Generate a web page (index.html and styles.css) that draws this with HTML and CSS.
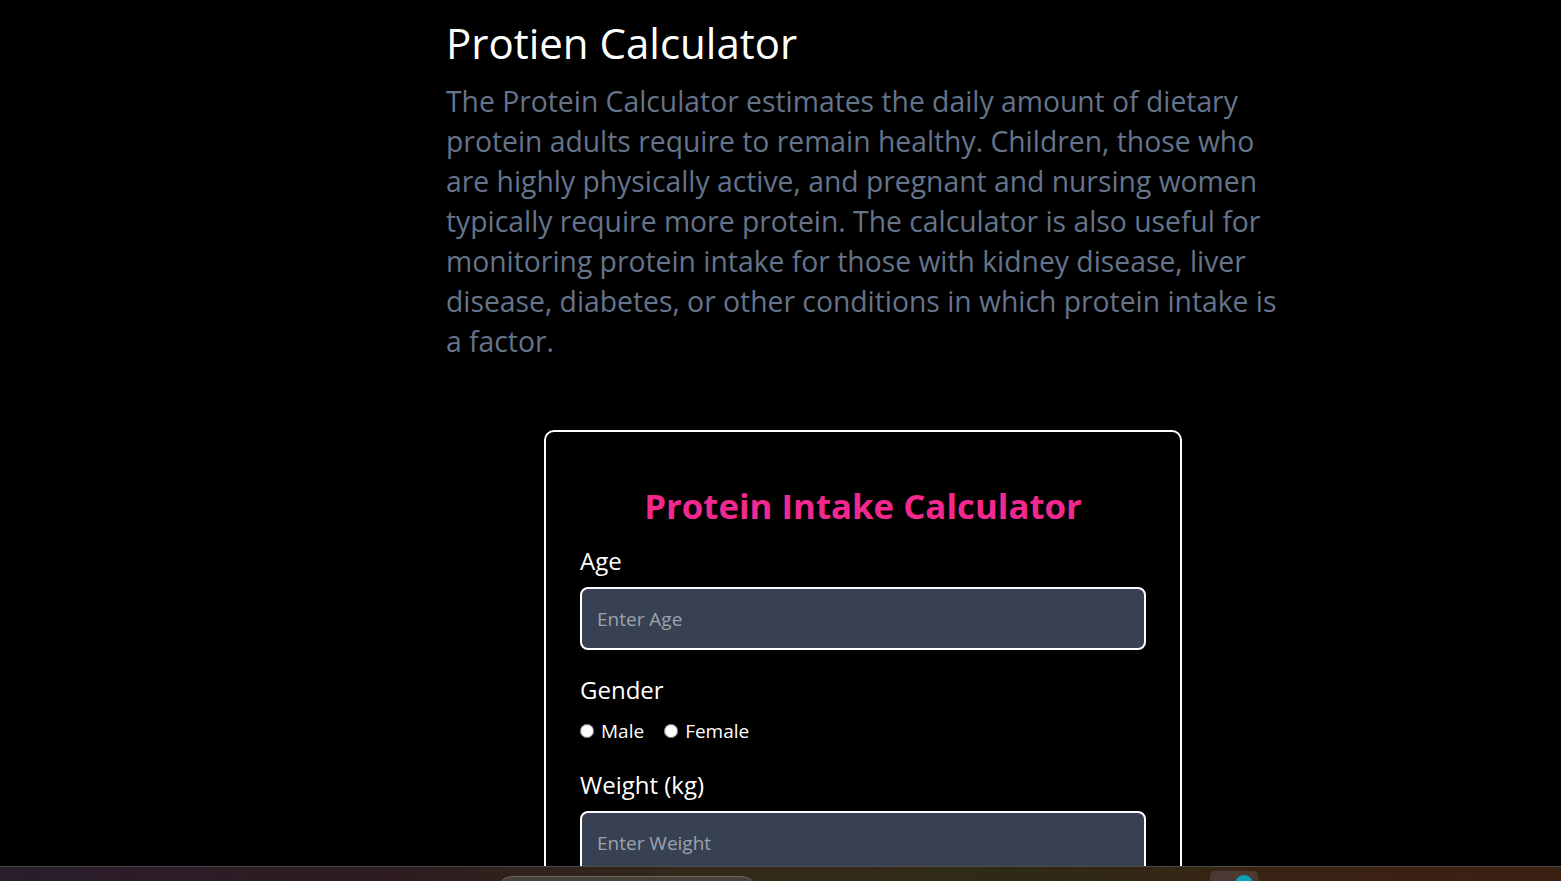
FILE: index.html
```html
<!DOCTYPE html>
<html lang="en">
<head>
<meta charset="utf-8">
<title>Protien Calculator</title>
<link rel="stylesheet" href="styles.css">
</head>
<body>
<main class="page">
  <h1 class="page-title">Protien Calculator</h1>
  <p class="page-desc">The Protein Calculator estimates the daily amount of dietary protein adults require to remain healthy. Children, those who are highly physically active, and pregnant and nursing women typically require more protein. The calculator is also useful for monitoring protein intake for those with kidney disease, liver disease, diabetes, or other conditions in which protein intake is a factor.</p>

  <form class="card">
    <h2 class="card-title">Protein Intake Calculator</h2>

    <label class="field-label" for="age">Age</label>
    <input class="field-input" id="age" type="text" placeholder="Enter Age">

    <div class="field-label gender-label">Gender</div>
    <div class="radio-row">
      <label class="radio"><input type="radio" name="gender" value="male"><span>Male</span></label>
      <label class="radio"><input type="radio" name="gender" value="female"><span>Female</span></label>
    </div>

    <label class="field-label weight-label" for="weight">Weight (kg)</label>
    <input class="field-input" id="weight" type="text" placeholder="Enter Weight">

    <div class="spacer"></div>
  </form>
</main>

<div class="taskbar">
  <div class="taskbar-search"></div>
  <div class="taskbar-app"><span class="taskbar-dot"></span></div>
</div>
</body>
</html>
```

FILE: styles.css
```css
* { box-sizing: border-box; }

html, body {
  margin: 0;
  background: #000;
  color: #fff;
  font-family: "Open Sans", "Noto Sans", sans-serif;
}

.page {
  width: 834px;
  margin-left: 446px;
  padding-top: 19px;
}

.page-title {
  margin: 0;
  font-size: 42px;
  line-height: 48px;
  font-weight: 400;
  color: #fff;
}

.page-desc {
  margin: 14px 0 0;
  font-size: 28.3px;
  line-height: 40px;
  color: #64748b;
}

.card {
  width: 638px;
  margin: 69px auto 0;
  border: 2px solid #fff;
  border-radius: 10px;
  padding: 50px 34px 40px;
}

.card-title {
  margin: 0;
  text-align: center;
  font-size: 34.8px;
  line-height: 48px;
  font-weight: 700;
  color: #f3288f;
}

.field-label {
  display: block;
  margin-top: 15px;
  font-size: 24px;
  line-height: 32px;
  color: #fff;
}

.gender-label {
  margin-top: 24px;
}

.weight-label {
  margin-top: 24px;
}

.field-input {
  display: block;
  width: 100%;
  height: 63px;
  margin-top: 10px;
  padding: 0 15px;
  background: #374151;
  border: 2px solid #fff;
  border-radius: 8px;
  color: #fff;
  font-family: inherit;
  font-size: 19px;
  outline: none;
}

.field-input::placeholder {
  color: #9ca3af;
}

.radio-row {
  display: flex;
  gap: 20px;
  margin-top: 11px;
  font-size: 19px;
  line-height: 28px;
}

.radio {
  display: flex;
  align-items: center;
  gap: 7px;
}

.radio input {
  margin: 0;
  width: 14px;
  height: 14px;
  accent-color: #fff;
}

.spacer { height: 200px; }

.taskbar {
  position: fixed;
  left: 0;
  right: 0;
  bottom: 0;
  height: 15px;
  border-top: 1px solid #4a4a4a;
  background: linear-gradient(90deg, #2a1d2c 0%, #2e1c20 25%, #33291a 45%, #2f2a18 65%, #3a2214 85%, #3c1f13 100%);
  overflow: hidden;
}

.taskbar-search {
  position: absolute;
  left: 497px;
  top: 9px;
  width: 260px;
  height: 30px;
  border-radius: 15px;
  border: 1px solid #6a6456;
  background: #48423a;
}

.taskbar-app {
  position: absolute;
  left: 1210px;
  top: 4px;
  width: 48px;
  height: 40px;
  border-radius: 5px;
  background: #4a3a33;
}

.taskbar-dot {
  position: absolute;
  left: 25px;
  top: 4px;
  width: 18px;
  height: 18px;
  border-radius: 50%;
  background: #0aa3b8;
}
```
